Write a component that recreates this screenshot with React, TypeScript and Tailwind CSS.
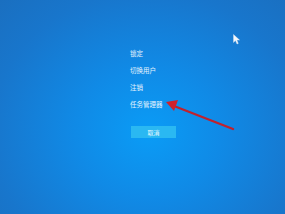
export default function App() {
  const items = ['锁定', '切换用户', '注销', '任务管理器'];
  return (
    <div
      className="relative w-[285px] h-[214px] overflow-hidden bg-[radial-gradient(ellipse_at_52%_62%,#0a9cf6_0%,#108ae6_35%,#1876cc_75%,#1a6fc0_100%)]"
      style={{ fontFamily: '"Noto Sans CJK SC", "Noto Sans", sans-serif' }}
    >
      <div className="flex flex-col pl-[130px] pt-[48px]">
        {items.map((t) => (
          <div key={t} className="h-[17px] text-[6.5px] leading-[10px] text-white/90">
            {t}
          </div>
        ))}
        <div className="mt-[10px] ml-[1px] w-[45px] h-[12px] bg-[#2ab8f2] flex items-center justify-center text-[6px] text-white/90">
          取消
        </div>
      </div>

      {/* mouse cursor */}
      <svg className="absolute left-[233px] top-[34px]" width="8" height="11" viewBox="0 0 8 11">
        <path d="M0.5 0.5 L0.5 8.5 L2.5 6.6 L4 10 L5.3 9.4 L3.9 6.1 L6.6 6.1 Z" fill="#f4f8fc" stroke="#d8e4f0" strokeWidth="0.4" />
      </svg>

      {/* red arrow */}
      <svg className="absolute left-0 top-0" width="285" height="214" viewBox="0 0 285 214">
        <line x1="233" y1="129" x2="174" y2="106" stroke="#c0222e" strokeWidth="2.4" strokeLinecap="round" />
        <polygon points="166,102 178,100 174,111" fill="#d0222c" />
      </svg>
    </div>
  );
}
